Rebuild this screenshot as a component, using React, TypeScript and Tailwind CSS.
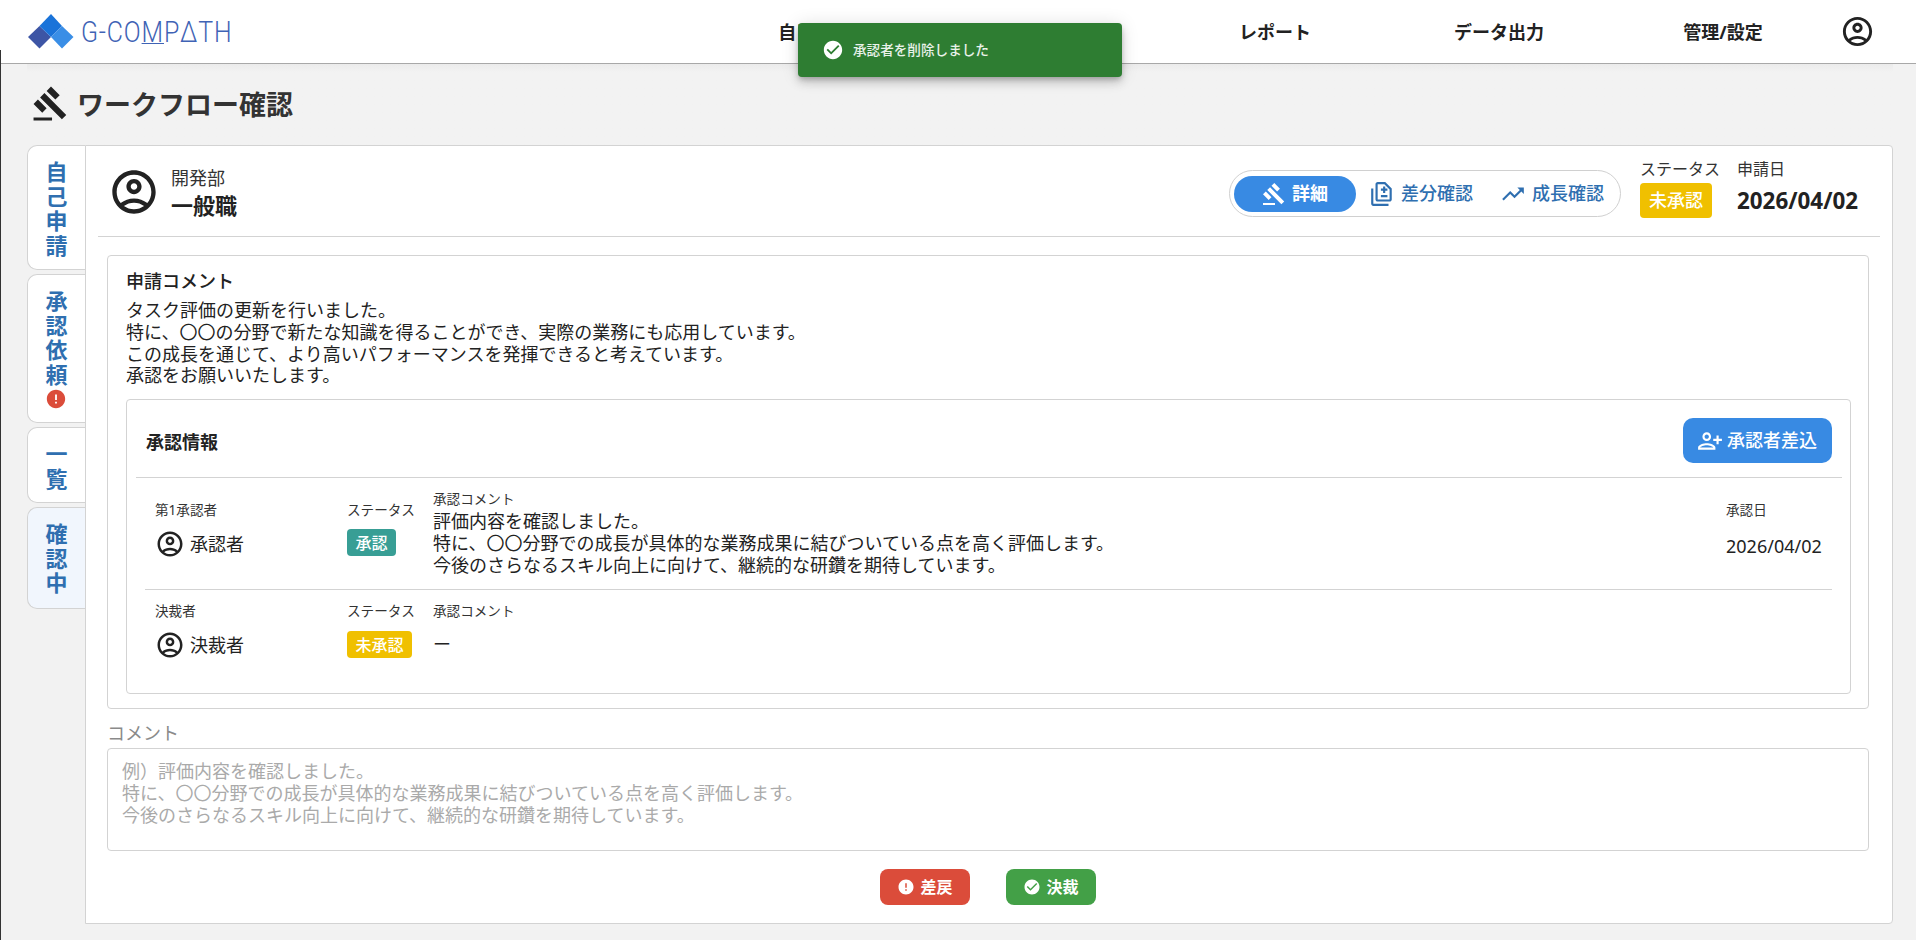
const GAVEL = "M1 21h12v2H1v-2zM5.245 8.07l2.83-2.827 14.14 14.142-2.828 2.828L5.245 8.07zM12.317 1l5.657 5.656-2.83 2.83-5.654-5.66L12.317 1zM3.825 9.485l5.657 5.657-2.828 2.828-5.657-5.657 2.828-2.828z"
const ACCOUNT = "M12 2C6.48 2 2 6.48 2 12s4.48 10 10 10 10-4.48 10-10S17.52 2 12 2zM7.35 18.5C8.66 17.56 10.26 17 12 17s3.34.56 4.65 1.5c-1.31.94-2.91 1.5-4.65 1.5s-3.34-.56-4.65-1.5zm10.79-1.38C16.45 15.8 14.32 15 12 15s-4.45.8-6.14 2.12C4.7 15.73 4 13.95 4 12c0-4.42 3.58-8 8-8s8 3.58 8 8c0 1.95-.7 3.73-1.86 5.12zM12 6c-1.93 0-3.5 1.57-3.5 3.5S10.07 13 12 13s3.5-1.57 3.5-3.5S13.93 6 12 6zm0 5c-.83 0-1.5-.67-1.5-1.5S11.17 8 12 8s1.5.67 1.5 1.5S12.83 11 12 11z"
const DIFF = "M18 23H4c-1.1 0-2-.9-2-2V7h2v14h14v2zM15 1H8c-1.1 0-1.99.9-1.99 2L6 17c0 1.1.89 2 1.99 2H19c1.1 0 2-.9 2-2V7l-6-6zm4 16H8V3h6.17L19 7.83V17zm-8-2h6v-2h-6v2zm2-4h2V9h2V7h-2V5h-2v2h-2v2h2v2z"
const TREND = "M16 6l2.29 2.29-4.88 4.88-4-4L2 16.59 3.41 18l6-6 4 4 6.3-6.29L22 12V6z"
const PERSON_ADD = "M13 8c0-2.21-1.79-4-4-4S5 5.79 5 8s1.79 4 4 4 4-1.79 4-4zm-2 0c0 1.1-.9 2-2 2s-2-.9-2-2 .9-2 2-2 2 .9 2 2zM1 18v2h16v-2c0-2.66-5.33-4-8-4s-8 1.34-8 4zm2 0c.2-.71 3.3-2 6-2 2.69 0 5.77 1.28 6 2H3zm17-3v-3h3v-2h-3V7h-2v3h-3v2h3v3h2z"
const ERROR = "M12 2C6.48 2 2 6.48 2 12s4.48 10 10 10 10-4.48 10-10S17.52 2 12 2zm1 15h-2v-2h2v2zm0-4h-2V7h2v6z"
const CHECK = "M12 2C6.48 2 2 6.48 2 12s4.48 10 10 10 10-4.48 10-10S17.52 2 12 2zm-2 15l-5-5 1.41-1.41L10 14.17l7.59-7.59L19 8l-9 9z"

function Icon({ d, className }: { d: string; className: string }) {
  return (
    <svg viewBox="0 0 24 24" fill="currentColor" className={className}>
      <path d={d} fillRule="evenodd" />
    </svg>
  )
}

function Logo() {
  return (
    <div className="flex items-center">
      <svg viewBox="0 0 46 35" className="w-[46px] h-[35px]">
        <polygon points="0,23 11.5,12 23,23 11.5,34.5" fill="#3d55a5" />
        <polygon points="11.5,12 23,0 34,12 23,23" fill="#1a73d9" />
        <polygon points="34,12 45.5,23 34,34.5 23,23" fill="#3a8ee6" />
      </svg>
      <span className="ml-[7px] origin-left scale-x-[0.83] text-[30px] font-light leading-none tracking-[1px] text-[#3f63b5] font-['Roboto',sans-serif]">
        G-CO<span className="inline-block leading-[22px] border-b border-[#3f63b5]">M</span>P&Delta;TH
      </span>
    </div>
  )
}

function Tab({ label, h, active, alert }: { label: string; h: string; active?: boolean; alert?: boolean }) {
  return (
    <div
      className={`${h} ${active ? "bg-[#f1f6fd]" : "bg-white"} flex flex-col items-center pt-[15px] pr-[2px] border border-r-0 border-[#d3d3d3] rounded-l-[10px]`}
    >
      <span className="[writing-mode:vertical-rl] text-[22px] font-bold leading-[24px] tracking-[2.5px] text-[#2f6fb0]">
        {label}
      </span>
      {alert && <Icon d={ERROR} className="w-[22px] h-[22px] text-[#db4c3a]" />}
    </div>
  )
}

function Chip({ children, color }: { children: string; color: string }) {
  return (
    <span className={`${color} inline-flex items-center h-[27px] px-[8.5px] rounded-[4px] text-white text-[16px] font-medium leading-none`}>
      {children}
    </span>
  )
}

function Label({ children }: { children: string }) {
  return <div className="text-[13.6px] leading-[20px] text-[#333]">{children}</div>
}

function ApproverRow({
  role,
  name,
  chip,
  chipColor,
  top,
  commentTop,
  height,
  chipGap,
  lines,
  date,
}: {
  role: string
  name: string
  chip: string
  chipColor: string
  top: string
  commentTop: string
  height: string
  chipGap: string
  lines: string[]
  date?: string
}) {
  return (
    <div className={`flex ml-[28px] ${height}`}>
      <div className={`w-[192px] ${top}`}>
        <Label>{role}</Label>
        <div className="flex items-center gap-[5px] mt-[9px] text-[18px] text-[#222]">
          <Icon d={ACCOUNT} className="w-[30px] h-[30px] text-[#222]" />
          {name}
        </div>
      </div>
      <div className={`w-[86px] ${top}`}>
        <Label>ステータス</Label>
        <div className={`${chipGap} flex`}>
          <Chip color={chipColor}>{chip}</Chip>
        </div>
      </div>
      <div className={`flex-1 ${commentTop}`}>
        <Label>承認コメント</Label>
        <div className={`${lines[0] === "ー" ? "mt-[13px]" : "mt-[2px]"} text-[18px] leading-[21.8px] text-[#222]`}>
          {lines.map((l) => (
            <div key={l}>{l}</div>
          ))}
        </div>
      </div>
      {date && (
        <div className={`w-[124px] ${top}`}>
          <Label>承認日</Label>
          <div className="mt-[15px] text-[18px] leading-[22px] text-[#222]">{date}</div>
        </div>
      )}
    </div>
  )
}

export default function App() {
  const nav = ["自己/評価表", "ワークフロー", "レポート", "データ出力", "管理/設定"]

  return (
    <div className="relative w-[1916px] h-[940px] overflow-hidden bg-[#f2f2f2] text-[#222] font-['Noto_Sans','Noto_Sans_CJK_JP',sans-serif]">
      <div className="absolute left-0 top-[50px] bottom-0 w-px bg-[#333]" />

      {/* Header */}
      <header className="flex items-center h-[64px] bg-white border-b border-[#a8a8a8] pl-[28px]">
        <div className="w-[687px]">
          <Logo />
        </div>
        <nav className="flex pt-[1px]">
          {nav.map((item) => (
            <div key={item} className="w-[224px] text-center text-[18px] font-bold text-[#222]">
              {item}
            </div>
          ))}
        </nav>
        <Icon d={ACCOUNT} className="ml-[5px] w-[35px] h-[35px] text-[#222]" />
      </header>

      {/* Toast */}
      <div className="absolute left-[798px] top-[23px] w-[324px] h-[54px] flex items-center pl-[24px] gap-[9px] bg-[#2e7d32] rounded-[4px] shadow-[0_3px_5px_-1px_rgba(0,0,0,0.2),0_6px_10px_0_rgba(0,0,0,0.14),0_1px_18px_0_rgba(0,0,0,0.12)]">
        <Icon d={CHECK} className="w-[22px] h-[22px] text-white" />
        <span className="text-[13.6px] font-medium text-white/90">承認者を削除しました</span>
      </div>

      <div className="pl-[27px] pr-[23px]">
        {/* Title */}
        <div className="h-[81px] pt-[21px] pl-[5px] flex items-start gap-[8px] bg-gradient-to-b from-[#ebebeb] to-[#f2f2f2] to-[8px]">
          <Icon d={GAVEL} className="w-[37px] h-[37px] text-[#222]" />
          <h1 className="mt-[1px] text-[27px] font-bold leading-[38px] text-[#333]">ワークフロー確認</h1>
        </div>

        <div className="flex">
          {/* Side tabs */}
          <div className="w-[58px] flex flex-col gap-[4px]">
            <Tab label="自己申請" h="h-[125px]" />
            <Tab label="承認依頼" h="h-[149px]" alert />
            <Tab label="一覧" h="h-[76px]" />
            <Tab label="確認中" h="h-[102px]" active />
          </div>

          {/* Card */}
          <div className="flex-1 h-[779px] bg-white border border-[#d3d3d3] rounded-r-[4px]">
            <div className="flex items-start h-[91px] mx-[12px] border-b border-[#d3d3d3]">
              <Icon d={ACCOUNT} className="ml-[10px] mt-[20px] w-[52px] h-[52px] text-[#222]" />
              <div className="ml-[11px] mt-[21px] flex-1">
                <div className="text-[18px] leading-[22px] text-[#333]">開発部</div>
                <div className="text-[22px] leading-[32px] font-bold text-[#222]">一般職</div>
              </div>

              <div className="mt-[24px] w-[392px] h-[47px] flex items-center p-[4px] border border-[#d0d0d0] rounded-full text-[#2f6fb0] text-[18px] font-medium">
                <div className="w-[122px] h-[36px] flex items-center justify-center gap-[6px] bg-[#388ae3] text-white font-bold rounded-full">
                  <Icon d={GAVEL} className="w-[24px] h-[24px]" />
                  詳細
                </div>
                <div className="ml-[13px] flex items-center gap-[6px]">
                  <Icon d={DIFF} className="w-[26px] h-[26px]" />
                  差分確認
                </div>
                <div className="ml-[27px] flex items-center gap-[6px]">
                  <Icon d={TREND} className="w-[26px] h-[26px]" />
                  成長確認
                </div>
              </div>

              <div className="ml-[19px] mt-[13px] w-[97px]">
                <div className="text-[16px] leading-[20px] text-[#333]">ステータス</div>
                <div className="mt-[4px] inline-flex items-center h-[35px] px-[9px] rounded-[4px] bg-[#f0c000] text-white text-[18px] font-medium">
                  未承認
                </div>
              </div>
              <div className="mt-[13px] mr-[20px] w-[123px]">
                <div className="text-[16px] leading-[20px] text-[#333]">申請日</div>
                <div className="mt-[7px] text-[22.4px] leading-[30px] font-bold text-[#222]">2026/04/02</div>
              </div>
            </div>

            <div className="ml-[21px] mr-[23px]">
              {/* Application comment */}
              <div className="mt-[18px] pl-[18px] pr-[17px] pt-[14px] pb-[14px] border border-[#d3d3d3] rounded-[4px]">
                <div className="text-[18px] font-medium leading-[22px] text-[#222]">申請コメント</div>
                <div className="mt-[8px] text-[18px] leading-[21.8px] text-[#222]">
                  <div>タスク評価の更新を行いました。</div>
                  <div>特に、〇〇の分野で新たな知識を得ることができ、実際の業務にも応用しています。</div>
                  <div>この成長を通じて、より高いパフォーマンスを発揮できると考えています。</div>
                  <div>承認をお願いいたします。</div>
                </div>

                {/* Approval info */}
                <div className="mt-[12px] h-[295px] border border-[#d3d3d3] rounded-[4px]">
                  <div className="flex items-start justify-between h-[78px] ml-[9px] mr-[8px] pl-[10px] pr-[10px] border-b border-[#d3d3d3]">
                    <span className="mt-[31px] text-[18px] leading-[22px] font-bold text-[#222]">承認情報</span>
                    <div className="mt-[18px] flex items-center gap-[4px] w-[149px] h-[45px] pl-[14px] bg-[#388ae3] rounded-[10px] text-white text-[18px] font-medium">
                      <Icon d={PERSON_ADD} className="w-[26px] h-[26px]" />
                      承認者差込
                    </div>
                  </div>
                  <ApproverRow
                    role="第1承認者"
                    name="承認者"
                    chip="承認"
                    chipColor="bg-[#389e95]"
                    top="pt-[22px]"
                    commentTop="pt-[11px]"
                    height="h-[111px]"
                    chipGap="mt-[9px]"
                    lines={[
                      "評価内容を確認しました。",
                      "特に、〇〇分野での成長が具体的な業務成果に結びついている点を高く評価します。",
                      "今後のさらなるスキル向上に向けて、継続的な研鑽を期待しています。",
                    ]}
                    date="2026/04/02"
                  />
                  <div className="h-px mx-[18px] bg-[#d3d3d3]" />
                  <ApproverRow
                    role="決裁者"
                    name="決裁者"
                    chip="未承認"
                    chipColor="bg-[#f0c000]"
                    top="pt-[11px]"
                    commentTop="pt-[11px]"
                    height="h-[100px]"
                    chipGap="mt-[10px]"
                    lines={["ー"]}
                  />
                </div>
              </div>

              {/* Comment input */}
              <div className="mt-[13px] text-[18px] leading-[22px] text-[#8a8a8a]">コメント</div>
              <textarea
                readOnly
                className="mt-[4px] block w-full h-[103px] px-[14px] py-[12px] border border-[#d3d3d3] rounded-[4px] resize-none outline-none text-[18px] leading-[21.8px] placeholder:text-[#aaaaaa]"
                placeholder={"例）評価内容を確認しました。\n特に、〇〇分野での成長が具体的な業務成果に結びついている点を高く評価します。\n今後のさらなるスキル向上に向けて、継続的な研鑽を期待しています。"}
              />

              <div className="mt-[18px] flex justify-center gap-[36px]">
                <div className="flex items-center justify-center gap-[5px] w-[90px] h-[36px] bg-[#db4c3a] rounded-[8px] text-white text-[16px] font-bold">
                  <Icon d={ERROR} className="w-[18px] h-[18px]" />
                  差戻
                </div>
                <div className="flex items-center justify-center gap-[5px] w-[90px] h-[36px] bg-[#43a047] rounded-[8px] text-white text-[16px] font-bold">
                  <Icon d={CHECK} className="w-[18px] h-[18px]" />
                  決裁
                </div>
              </div>
            </div>
          </div>
        </div>
      </div>
    </div>
  )
}
